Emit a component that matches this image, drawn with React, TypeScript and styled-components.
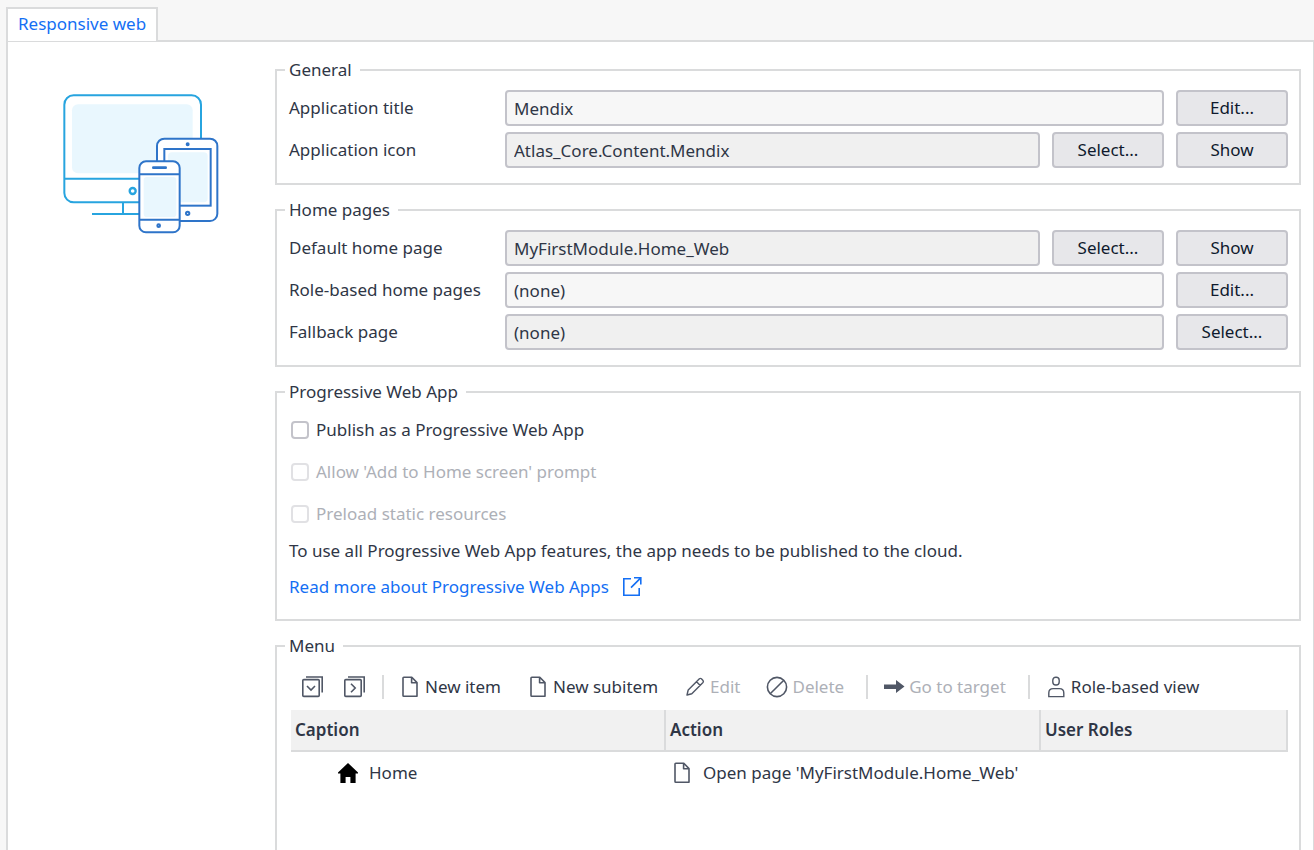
import React from "react";
import styled, { createGlobalStyle } from "styled-components";

const line = "#dadbdc";
const ink = "#2f3646";
const stroke = "#505766";
const blue = "#146ff4";

const GlobalStyle = createGlobalStyle`
  * { box-sizing: border-box; }
  body {
    margin: 0;
    background: #f7f7f7;
    color: ${ink};
    font: 17px/24px "Noto Sans", "Open Sans", sans-serif;
  }
  button, input { font: inherit; color: inherit; }
`;

const Page = styled.div`
  display: flex;
  flex-direction: column;
  min-height: 100vh;
  padding: 7px 0 0 6px;
`;

const TabBar = styled.div`
  display: flex;
  position: relative;
  z-index: 1;
  margin-bottom: -1px;
`;

const Tab = styled.button`
  height: 34px;
  padding: 0 10px 2px;
  border: 2px solid ${line};
  border-bottom: 0;
  background: #fff;
  color: ${blue};
`;

const Panel = styled.main`
  display: flex;
  flex: 1;
  border: solid ${line};
  border-width: 2px 1px 0 2px;
  background: #fff;
`;

const Side = styled.div`
  flex: none;
  width: 267px;
  padding: 43px 0 0 42px;
`;

const Content = styled.div`
  display: flex;
  flex: 1;
  flex-direction: column;
  gap: 13px;
  min-width: 0;
  padding: 16px 12px 0 0;
`;

const Group = styled.fieldset<{ $fill?: boolean }>`
  min-width: 0;
  margin: 0;
  padding: 8px 11px 15px 12px;
  border: 2px solid ${line};
  ${(p) => p.$fill && "flex: 1; border-bottom: 0;"}
`;

const Legend = styled.legend`
  margin-left: -4px;
  padding: 0 8px 0 4px;
`;

const Rows = styled.div`
  display: flex;
  flex-direction: column;
  gap: 6px;
`;

const Row = styled.div`
  display: flex;
  align-items: center;
  gap: 12px;
`;

const Label = styled.label`
  flex: none;
  width: 204px;
  white-space: nowrap;
`;

const Field = styled.input<{ $locked?: boolean }>`
  flex: 1;
  min-width: 0;
  height: 36px;
  padding: 0 7px;
  border: 2px solid #c3c3ca;
  border-radius: 4px;
  background: ${(p) => (p.$locked ? "#f0f0f0" : "#f7f7f7")};
`;

const Button = styled.button`
  flex: none;
  width: 112px;
  height: 36px;
  padding: 0;
  border: 2px solid #c3c3ca;
  border-radius: 4px;
  background: #e7e7ea;
  color: #0f1a2e;
`;

const CheckRow = styled.label<{ $off?: boolean }>`
  display: flex;
  align-items: center;
  gap: 7px;
  height: 36px;
  padding-left: 2px;
  color: ${(p) => (p.$off ? "#adb0b7" : ink)};
`;

const Check = styled.input`
  appearance: none;
  width: 18px;
  height: 18px;
  margin: 0;
  border: 2px solid #c3c3ca;
  border-radius: 4px;
  background: #fff;
  &:checked { background: ${blue}; }
  &:disabled { border-color: #e1e1e4; }
`;

const Note = styled.p`
  margin: 7px 0 12px;
`;

const MoreLink = styled.a`
  display: flex;
  align-items: center;
  gap: 12px;
  width: fit-content;
  margin-bottom: 5px;
  color: ${blue};
  text-decoration: none;
`;

const Toolbar = styled.div`
  display: flex;
  align-items: center;
  height: 44px;
  padding: 0 0 2px 4px;
`;

const IconButton = styled.button`
  display: flex;
  margin-right: 4px;
  padding: 0 8px;
  border: 0;
  background: none;
  & + & { margin-right: 0; }
`;

const Tool = styled.button`
  display: flex;
  align-items: center;
  gap: 4px;
  padding: 0 13px;
  border: 0;
  background: none;
  white-space: nowrap;
  &:disabled { color: #adb0b7; }
`;

const Separator = styled.span`
  width: 2px;
  height: 24px;
  margin: 0 2px 0 9px;
  background: ${line};
`;

const Table = styled.table`
  width: calc(100% - 2px);
  margin-left: 2px;
  table-layout: fixed;
  border-collapse: separate;
  border-spacing: 0;
`;

const Head = styled.th<{ $width?: number }>`
  width: ${(p) => (p.$width ? `${p.$width}px` : "auto")};
  height: 42px;
  padding: 0 4px;
  border: solid ${line};
  border-width: 0 2px 2px 0;
  background: #f1f1f1;
  font-weight: 600;
  text-align: left;
`;

const Cell = styled.td`
  height: 42px;
  padding: 0;
`;

const CellContent = styled.div<{ $indent: number }>`
  display: flex;
  align-items: center;
  gap: 10px;
  padding-left: ${(p) => p.$indent}px;
`;

const Icon = ({ children, color = stroke }: { children: React.ReactNode; color?: string }) => (
  <svg width="22" height="22" viewBox="0 0 22 22" fill="none" stroke={color} strokeWidth="1.6" aria-hidden="true">
    {children}
  </svg>
);

const FileIcon = () => (
  <Icon>
    <path d="M4.8 1.2H12.8L18 6.6V20.2H4.8Q4 20.2 4 19.4V2Q4 1.2 4.8 1.2Z M12.6 1.4V6.8H17.8" strokeLinejoin="round" />
  </Icon>
);

const Stack = ({ arrow }: { arrow: string }) => (
  <Icon>
    <rect x="1.8" y="3.6" width="16.4" height="16.8" rx="1" />
    <path d="M5 1H21.2V16.5" strokeWidth="1.6" />
    <path d={arrow} />
  </Icon>
);

const Devices = () => (
  <svg width="180" height="160" viewBox="0 0 540 480" fill="none" strokeWidth="6" role="img" aria-label="Monitor, tablet and phone">
    <g stroke="#27a4df">
      <rect x="43" y="31" width="410" height="321" rx="28" fill="#fff" />
      <rect x="66" y="58" width="362" height="207" rx="18" fill="#e9f7fe" stroke="none" />
      <path d="M43 281H270M219 352V385M126 387H270" />
      <circle cx="248" cy="318" r="9" strokeWidth="7" />
    </g>
    <g stroke="#2e74c9">
      <rect x="321" y="161" width="181" height="247" rx="22" fill="#fff" />
      <rect x="343" y="192" width="139" height="170" fill="#fff" />
      <rect x="354" y="202" width="119" height="150" rx="12" fill="#e9f7fe" stroke="none" />
      <circle cx="413" cy="178" r="3" />
      <circle cx="413" cy="385" r="5" />
      <rect x="268" y="229" width="121" height="213" rx="20" fill="#fff" />
      <rect x="281" y="276" width="98" height="120" rx="10" fill="#e9f7fe" stroke="none" />
      <path d="M268 268H389M268 404H389" />
      <path d="M310 248H347" strokeWidth="8" strokeLinecap="round" />
      <circle cx="326" cy="422" r="4" />
    </g>
  </svg>
);

type RowProps = { id: string; label: string; value: string; locked?: boolean; actions: string[] };

const FieldRow = ({ id, label, value, locked, actions }: RowProps) => (
  <Row>
    <Label htmlFor={id}>{label}</Label>
    <Field id={id} defaultValue={value} readOnly={locked} $locked={locked} />
    {actions.map((a) => (
      <Button key={a} type="button">{a}</Button>
    ))}
  </Row>
);

export default function App() {
  return (
    <Page>
      <GlobalStyle />
      <TabBar role="tablist">
        <Tab type="button" role="tab" aria-selected="true">Responsive web</Tab>
      </TabBar>
      <Panel>
        <Side><Devices /></Side>
        <Content>
          <Group>
            <Legend>General</Legend>
            <Rows>
              <FieldRow id="title" label="Application title" value="Mendix" actions={["Edit..."]} />
              <FieldRow id="icon" label="Application icon" value="Atlas_Core.Content.Mendix" locked actions={["Select...", "Show"]} />
            </Rows>
          </Group>
          <Group>
            <Legend>Home pages</Legend>
            <Rows>
              <FieldRow id="home" label="Default home page" value="MyFirstModule.Home_Web" locked actions={["Select...", "Show"]} />
              <FieldRow id="roles" label="Role-based home pages" value="(none)" actions={["Edit..."]} />
              <FieldRow id="fallback" label="Fallback page" value="(none)" locked actions={["Select..."]} />
            </Rows>
          </Group>
          <Group>
            <Legend>Progressive Web App</Legend>
            <Rows>
              <CheckRow><Check type="checkbox" />Publish as a Progressive Web App</CheckRow>
              <CheckRow $off><Check type="checkbox" disabled />Allow 'Add to Home screen' prompt</CheckRow>
              <CheckRow $off><Check type="checkbox" disabled />Preload static resources</CheckRow>
            </Rows>
            <Note>To use all Progressive Web App features, the app needs to be published to the cloud.</Note>
            <MoreLink href="#pwa">
              Read more about Progressive Web Apps
              <Icon color={blue}>
                <path d="M10 2.8H2.8V19.2H18.2V12M13 1.8H19.8V8.6M19.5 2.1L10 11.6" />
              </Icon>
            </MoreLink>
          </Group>
          <Group $fill>
            <Legend>Menu</Legend>
            <Toolbar>
              <IconButton type="button" aria-label="Collapse all"><Stack arrow="M6 10L10 14L14 10" /></IconButton>
              <IconButton type="button" aria-label="Expand all"><Stack arrow="M8 7.8L12.2 12L8 16.2" /></IconButton>
              <Separator />
              <Tool type="button"><FileIcon />New item</Tool>
              <Tool type="button"><FileIcon />New subitem</Tool>
              <Tool type="button" disabled>
                <Icon>
                  <path d="M3 19L4.2 14L15.4 2.8Q16.4 2 17.4 2.8L19 4.5Q19.8 5.5 19 6.5L7.8 17.7ZM12.6 5.8L16.2 9.4" strokeWidth="1.4" strokeLinejoin="round" />
                </Icon>
                Edit
              </Tool>
              <Tool type="button" disabled>
                <Icon><circle cx="11" cy="11" r="9.6" /><path d="M4.2 17.8L17.8 4.2" /></Icon>
                Delete
              </Tool>
              <Separator />
              <Tool type="button" disabled>
                <Icon><path d="M1 8.5H13V4L21.5 10.5L13 17V13H1Z" fill={stroke} stroke="none" /></Icon>
                Go to target
              </Tool>
              <Separator />
              <Tool type="button">
                <Icon>
                  <rect x="7.8" y="1.2" width="6.4" height="7.8" rx="3" strokeWidth="1.4" />
                  <path d="M3.8 20.6V17Q3.8 12.6 8.2 12.6H14.4Q18.8 12.6 18.8 17V20.6Z" strokeWidth="1.4" />
                </Icon>
                Role-based view
              </Tool>
            </Toolbar>
            <Table>
              <thead>
                <tr>
                  <Head $width={375}>Caption</Head>
                  <Head $width={375}>Action</Head>
                  <Head>User Roles</Head>
                </tr>
              </thead>
              <tbody>
                <tr>
                  <Cell>
                    <CellContent $indent={46}>
                      <Icon>
                        <path d="M11 1L1 10.6V11.4H3.4V21H8.6V15H13.4V21H18.6V11.4H21V10.6Z" fill="#000" stroke="none" />
                      </Icon>
                      Home
                    </CellContent>
                  </Cell>
                  <Cell>
                    <CellContent $indent={5}><FileIcon />Open page 'MyFirstModule.Home_Web'</CellContent>
                  </Cell>
                  <Cell />
                </tr>
              </tbody>
            </Table>
          </Group>
        </Content>
      </Panel>
    </Page>
  );
}
